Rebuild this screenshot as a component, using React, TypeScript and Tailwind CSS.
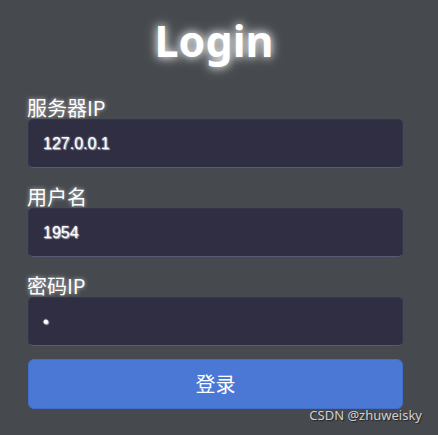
export default function App() {
  const groups = [
    { label: "服务器IP", value: "127.0.0.1" },
    { label: "用户名", value: "1954" },
    { label: "密码IP", value: "•" },
  ];
  return (
    <div className="relative w-[438px] h-[435px] bg-[#46494d] overflow-hidden">
      <div className="pt-[15px] flex flex-col">
        <div
          className="h-[52px] flex items-center justify-center text-white font-bold text-[43px] leading-[52px] pr-[10px]"
          style={{ fontFamily: '"Noto Sans", "Open Sans", sans-serif', textShadow: "0 0 8px rgba(255,255,255,0.9), 0 0 14px rgba(255,255,255,0.5)" }}
        >
          Login
        </div>
        <div className="mt-[30px] pl-[28px] pr-[35px] flex flex-col gap-[18px]">
          {groups.map((g) => (
            <div key={g.label} className="flex flex-col">
              <div
                className="h-[22px] leading-[22px] text-[20px] text-white -ml-[1px]"
                style={{ fontFamily: '"Noto Sans CJK SC", "Noto Sans", sans-serif', textShadow: "0 0 4px rgba(255,255,255,0.7)" }}
              >
                {g.label}
              </div>
              <div className="h-[49px] rounded-[5px] bg-[#2f2e42] border border-[#35344a] border-b-[#5a5978] flex items-center pl-[14px]">
                <span
                  className="text-white text-[16px] leading-none"
                  style={{ fontFamily: '"Liberation Sans", Arial, sans-serif', textShadow: "1px 1px 1px rgba(255,255,255,0.6), 0 0 2px rgba(255,255,255,0.7)" }}
                >
                  {g.value}
                </span>
              </div>
            </div>
          ))}
          <button
            className="mt-[-5px] h-[50px] rounded-[6px] bg-[#4a78d4] border border-[#416ec8] text-white text-[20px] flex items-center justify-center"
            style={{ fontFamily: '"Noto Sans CJK SC", "Noto Sans", sans-serif' }}
          >
            登录
          </button>
        </div>
      </div>
      <div
        className="absolute right-[16px] top-[406px] text-[13px] text-[#d0d0d0]"
        style={{ fontFamily: '"Noto Sans", "Open Sans", sans-serif', textShadow: "1px 1px 1px rgba(0,0,0,0.5)" }}
      >
        CSDN @zhuweisky
      </div>
    </div>
  );
}
